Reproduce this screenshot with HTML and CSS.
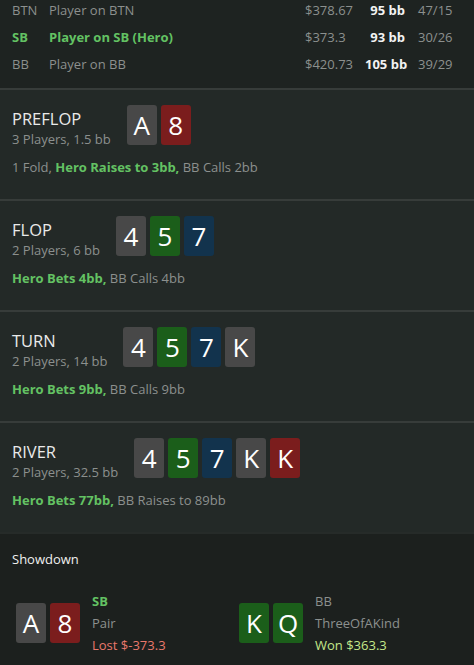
FILE: index.html
```html
<!DOCTYPE html>
<html>
<head>
<meta charset="utf-8">
<link rel="stylesheet" href="styles.css">
</head>
<body>
<div class="page">
  <div class="players">
    <div class="prow"><span class="pos">BTN</span><span class="pname">Player on BTN</span><span class="money">$378.67</span><span class="bb">95 bb</span><span class="stat">47/15</span></div>
    <div class="prow hero"><span class="pos">SB</span><span class="pname">Player on SB (Hero)</span><span class="money">$373.3</span><span class="bb">93 bb</span><span class="stat">30/26</span></div>
    <div class="prow"><span class="pos">BB</span><span class="pname">Player on BB</span><span class="money">$420.73</span><span class="bb">105 bb</span><span class="stat">39/29</span></div>
  </div>

  <div class="street">
    <div class="street-head">
      <div class="street-info">
        <div class="street-name">PREFLOP</div>
        <div class="street-sub">3 Players, 1.5 bb</div>
      </div>
      <div class="cards"><span class="card gray">A</span><span class="card red">8</span></div>
    </div>
    <div class="actions">1 Fold, <b class="hl">Hero Raises to 3bb,</b> BB Calls 2bb</div>
  </div>

  <div class="street">
    <div class="street-head">
      <div class="street-info">
        <div class="street-name">FLOP</div>
        <div class="street-sub">2 Players, 6 bb</div>
      </div>
      <div class="cards"><span class="card gray">4</span><span class="card green">5</span><span class="card blue">7</span></div>
    </div>
    <div class="actions"><b class="hl">Hero Bets 4bb,</b> BB Calls 4bb</div>
  </div>

  <div class="street">
    <div class="street-head">
      <div class="street-info">
        <div class="street-name">TURN</div>
        <div class="street-sub">2 Players, 14 bb</div>
      </div>
      <div class="cards"><span class="card gray">4</span><span class="card green">5</span><span class="card blue">7</span><span class="card gray">K</span></div>
    </div>
    <div class="actions"><b class="hl">Hero Bets 9bb,</b> BB Calls 9bb</div>
  </div>

  <div class="street">
    <div class="street-head">
      <div class="street-info">
        <div class="street-name">RIVER</div>
        <div class="street-sub">2 Players, 32.5 bb</div>
      </div>
      <div class="cards"><span class="card gray">4</span><span class="card green">5</span><span class="card blue">7</span><span class="card gray">K</span><span class="card red">K</span></div>
    </div>
    <div class="actions"><b class="hl">Hero Bets 77bb,</b> BB Raises to 89bb</div>
  </div>

  <div class="showdown">
    <div class="sd-title">Showdown</div>
    <div class="sd-players">
      <div class="sd-player sd-left">
        <div class="cards"><span class="card gray">A</span><span class="card red">8</span></div>
        <div class="sd-info">
          <div class="sd-pos hl">SB</div>
          <div class="sd-hand">Pair</div>
          <div class="sd-res lost">Lost $-373.3</div>
        </div>
      </div>
      <div class="sd-player sd-right">
        <div class="cards"><span class="card green">K</span><span class="card green">Q</span></div>
        <div class="sd-info">
          <div class="sd-pos">BB</div>
          <div class="sd-hand">ThreeOfAKind</div>
          <div class="sd-res won">Won $363.3</div>
        </div>
      </div>
    </div>
  </div>
</div>
</body>
</html>
```

FILE: styles.css
```css
html, body {
  margin: 0;
  padding: 0;
  background: #1c201e;
}
body {
  font-family: "Open Sans", "Noto Sans", sans-serif;
  font-size: 13px;
  color: #8c908e;
  width: 474px;
  height: 665px;
  overflow: hidden;
}
.page {
  display: flex;
  flex-direction: column;
}
.players {
  background: #1e2321;
  padding: 0 12px 11px 12px;
  margin-top: -4px;
}
.prow {
  display: flex;
  align-items: center;
  height: 27px;
  white-space: nowrap;
}
.pos { width: 37px; }
.pname { flex: 1; }
.money { width: 60px; }
.bb {
  width: 40px;
  text-align: right;
  font-weight: 700;
  color: #f2f2f2;
}
.stat { width: 44px; padding-left: 13px; }
.hero .pos, .hero .pname { color: #63c263; font-weight: 700; }

.street {
  background: #232927;
  border-top: 2px solid #373c3a;
  padding: 15px 12px 0 12px;
  height: 94px;
}
.street-head {
  display: flex;
  align-items: flex-start;
  gap: 16px;
}
.street-info {
  padding-top: 3px;
}
.street-name {
  font-size: 16.5px;
  color: #eaeaea;
  line-height: 22px;
}
.street-sub {
  line-height: 18px;
  color: #8c908e;
}
.actions {
  margin-top: 10px;
  line-height: 18px;
}
.hl { color: #63c263; font-weight: 700; }

.cards {
  display: flex;
  gap: 4px;
}
.card {
  width: 30px;
  height: 40px;
  border-radius: 3px;
  color: #ffffff;
  font-size: 26px;
  display: flex;
  align-items: center;
  justify-content: center;
  line-height: 1;
}
.gray { background: #484848; }
.red { background: #7b1d1d; }
.green { background: #1b5e1a; }
.blue { background: #12334d; }

.showdown {
  background: #1c201e;
  border-top: 2px solid #262b29;
  padding: 16px 12px 0 12px;
  flex: 1;
  height: 140px;
}
.sd-title {
  color: #f0f0f0;
  line-height: 18px;
}
.sd-players {
  display: grid;
  grid-template-columns: 225px 225px;
  margin-top: 22px;
}
.sd-player {
  display: flex;
  align-items: center;
  gap: 12px;
}
.sd-left { padding-left: 4px; }
.sd-right { padding-left: 2px; }
.sd-info {
  display: flex;
  flex-direction: column;
}
.sd-info > div { line-height: 22px; }
.sd-pos { font-weight: 700; }
.sd-left .sd-pos { color: #63c263; }
.sd-right .sd-pos { font-weight: 400; }
.lost { color: #e8786c; }
.won { color: #c4e88a; }
```
